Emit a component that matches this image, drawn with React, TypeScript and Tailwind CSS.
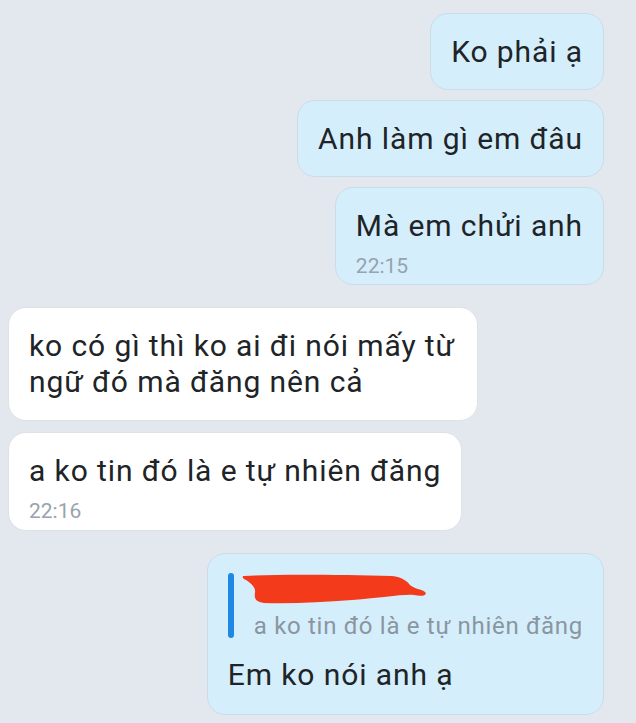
import React from "react";

const font = { fontFamily: "Roboto, 'Noto Sans', sans-serif" };

function Out({ children, time }: { children: React.ReactNode; time?: string }) {
  return (
    <div className={`self-end rounded-[18px] border border-[#c9dce8] bg-[#d5eefc] px-[20px] pt-[20px] ${time ? "pb-[8px]" : "pb-[19px]"} text-[30px] leading-[36px] tracking-[0.9px] text-[#202427]`}>
      <div>{children}</div>
      {time && <div className="mt-[12px] text-[21px] leading-[20px] tracking-normal text-[#97a3ad]">{time}</div>}
    </div>
  );
}

function In({ children, time, className = "" }: { children: React.ReactNode; time?: string; className?: string }) {
  return (
    <div className={`self-start rounded-[18px] border border-[#dde2e7] bg-white px-[20px] pt-[20px] ${time ? "pb-[9px]" : "pb-[20px]"} text-[30px] leading-[36px] tracking-[0.9px] text-[#202427] ${className}`}>
      <div>{children}</div>
      {time && <div className="mt-[12px] text-[21px] leading-[20px] tracking-normal text-[#97a3ad]">{time}</div>}
    </div>
  );
}

export default function App() {
  return (
    <div style={font} className="min-h-[723px] w-[636px] overflow-hidden bg-[#e3e8ef]">
      <div className="flex flex-col gap-[10px] pl-[8px] pr-[32px] pt-[13px]">
        <Out>Ko phải ạ</Out>
        <Out>Anh làm gì em đâu</Out>
        <Out time="22:15">Mà em chửi anh</Out>
        <In className="mt-[12px] w-[470px] whitespace-nowrap">
          ko có gì thì ko ai đi nói mấy từ
          <br />
          ngữ đó mà đăng nên cả
        </In>
        <In time="22:16" className="mt-[1px]">a ko tin đó là e tự nhiên đăng</In>
        <div className="mt-[12px] self-end rounded-[18px] border border-[#c9dce8] bg-[#d5eefc] px-[20px] pt-[19px] pb-[21px] text-[#202427]">
          <div className="flex">
            <div className="w-[6px] rounded-full bg-[#1e88e5]" />
            <div className="pl-[20px]">
              <div className="h-[41px]">
                <svg width="188" height="36" viewBox="0 0 188 36" className="-ml-[12px] block">
                  <path
                    d="M2 3 C40 1 100 2 150 3 C160 4 165 8 168 12 C172 16 180 16 183 19 C186 22 180 24 172 22 C160 21 140 25 110 27 C80 29 50 31 22 30 C14 29 12 26 13 20 C14 15 10 11 4 7 C0 5 0 3 2 3 Z"
                    fill="#f33a1b"
                  />
                </svg>
              </div>
              <div className="text-[24px] leading-[24px] tracking-[0.7px] text-[#8a969f]">a ko tin đó là e tự nhiên đăng</div>
            </div>
          </div>
          <div className="mt-[19px] text-[30px] leading-[36px] tracking-[0.9px]">Em ko nói anh ạ</div>
        </div>
      </div>
    </div>
  );
}
